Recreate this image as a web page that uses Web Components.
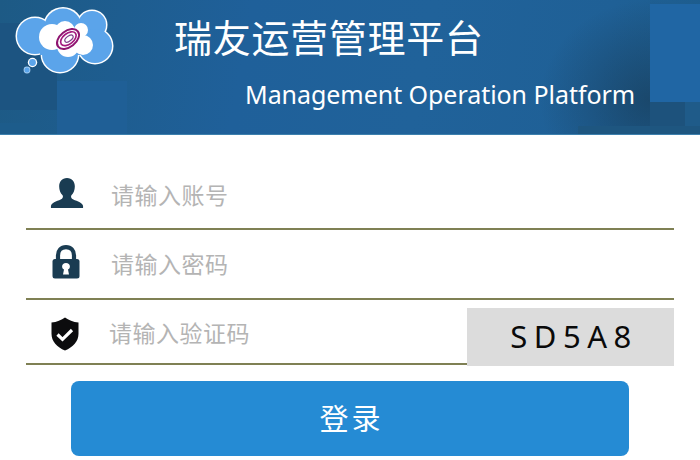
<!DOCTYPE html>
<html lang="zh">
<head>
<meta charset="utf-8">
<title>瑞友运营管理平台</title>
<style>
    html, body { margin: 0; background: #fff; }
    body { width: 700px; height: 460px; overflow: hidden; }
</style>
</head>
<body>
<login-page>
    <app-banner title-text="瑞友运营管理平台" sub-text="Management Operation Platform"></app-banner>
    <login-field icon="user" row-height="95" text-shift="0" text-left="111" icon-shift="-1" icon-x="1">请输入账号</login-field>
    <login-field icon="lock" row-height="70" text-shift="-1.500" text-left="111" icon-shift="-2" icon-x="0">请输入密码</login-field>
    <login-field icon="shield" row-height="65" text-shift="3" text-left="109" icon-shift="5" icon-x="-1" code="SD5A8">请输入验证码</login-field>
    <login-button>登录</login-button>
</login-page>

<script>
class LoginPage extends HTMLElement {
    connectedCallback() {
        let shadowRoot = this.attachShadow({mode: 'open'})
        shadowRoot.innerHTML = `
        <style>
            :host {
                display: flex;
                flex-direction: column;
                width: 700px;
                height: 460px;
                font-family: "Open Sans", "Noto Sans CJK SC", sans-serif;
            }
        </style>
        <slot></slot>
        `
    }
}

class AppBanner extends HTMLElement {
    connectedCallback() {
        let shadowRoot = this.attachShadow({mode: 'open'})
        shadowRoot.innerHTML = `
        <style>
            :host {
                display: block;
                position: relative;
                height: 134px;
                flex: none;
                overflow: hidden;
                border-bottom: 1px solid #3d80ad;
                background:
                    radial-gradient(ellipse 110px 100px at 650px 100px, rgba(24,62,92,.7), rgba(24,62,92,0) 100%),
                    linear-gradient(100deg, #1d5a85 0%, #1f609a 35%, #20629a 60%, #1f6096 85%, #1d5c8c 100%);
            }
            .patch { position: absolute; }
            .p1 { left: 0; top: 23px; width: 57px; height: 87px; background: #1c5481; }
            .p2 { left: 57px; top: 81px; width: 70px; height: 53px; background: #1f5f96; }
            .p3 { left: 0; top: 123px; width: 40px; height: 11px; background: #1d5c8b; }
            .p4 { left: 650px; top: 4px; width: 50px; height: 98px; background: #2066a4; }
            .p5 { left: 578px; top: 126px; width: 122px; height: 8px; background: #1e5680; }
            .p6 { left: 650px; top: 102px; width: 35px; height: 24px; background: #1d527c; }
            .p7 { left: 685px; top: 102px; width: 15px; height: 24px; background: #1f5b89; }
            .logo { position: absolute; left: 13px; top: 4px; width: 104px; height: 72px; }
            .texts {
                position: relative;
                display: flex;
                flex-direction: column;
                height: 100%;
                color: #fff;
            }
            .title {
                margin: 11px 0 0 174px;
                font-family: "Noto Sans CJK SC", sans-serif;
                font-size: 38px;
                line-height: 50px;
                letter-spacing: .7px;
                white-space: nowrap;
            }
            .sub {
                margin: 16px 0 0 245px;
                font-family: "Noto Sans", sans-serif;
                font-size: 25px;
                line-height: 34px;
                letter-spacing: -.05px;
                white-space: nowrap;
            }
        </style>
        <div class="patch p1"></div>
        <div class="patch p2"></div>
        <div class="patch p3"></div>
        <div class="patch p4"></div>
        <div class="patch p5"></div>
        <div class="patch p6"></div>
        <div class="patch p7"></div>
        <svg class="logo" viewBox="13 4 104 72">
            <g fill="#fff">
                <circle cx="35" cy="36" r="19.500"/>
                <circle cx="63" cy="27" r="20"/>
                <circle cx="92" cy="25" r="15.500"/>
                <circle cx="95" cy="46" r="18.500"/>
                <circle cx="60" cy="54" r="19.500"/>
                <rect x="40" y="25" width="50" height="30"/>
                <circle cx="32.500" cy="62.500" r="4.700"/>
                <circle cx="27" cy="70" r="3.400" fill="#a5cdf0"/>
            </g>
            <g fill="#5ba4ea">
                <circle cx="35" cy="36" r="18"/>
                <circle cx="63" cy="27" r="18.500"/>
                <circle cx="92" cy="25" r="14"/>
                <circle cx="95" cy="46" r="17"/>
                <circle cx="60" cy="54" r="18"/>
                <rect x="40" y="25" width="50" height="30"/>
                <circle cx="32.500" cy="62.500" r="3.400"/>
                <circle cx="27" cy="70" r="2.500"/>
            </g>
            <g fill="#fff">
                <circle cx="52" cy="37" r="13"/>
                <circle cx="65" cy="31" r="10"/>
                <circle cx="81" cy="30" r="7"/>
                <circle cx="83" cy="45" r="10"/>
                <circle cx="68" cy="46" r="11"/>
                <rect x="55" y="30" width="30" height="18"/>
            </g>
            <g fill="none" transform="rotate(-38 68 39)">
                <ellipse cx="68" cy="39" rx="12.500" ry="8" stroke-width="2" stroke="#8e1470"/>
                <ellipse cx="68.500" cy="39" rx="9" ry="5.300" stroke-width="1.700" stroke="#a3197e"/>
                <ellipse cx="69" cy="39.300" rx="4.800" ry="2.500" stroke-width="1.200" stroke="#7d3f8c"/>
            </g>
        </svg>
        <div class="texts">
            <div class="title">${this.getAttribute('title-text')}</div>
            <div class="sub">${this.getAttribute('sub-text')}</div>
        </div>
        `
    }
}

const FIELD_ICONS = {
    user: `<svg width="34" height="32" viewBox="0 0 36 34" preserveAspectRatio="none" fill="#1a3c52">
        <path d="M18 1c-5.400 0-8.300 4-8.300 9 0 3.800 1.400 7 3.400 9.200.9 1 .8 3-.4 3.800C9.300 25.300 2.500 25.800 1 30.500V33h34v-2.500c-1.500-4.700-8.300-5.200-11.700-7.500-1.200-.8-1.300-2.800-.4-3.800 2-2.200 3.400-5.400 3.400-9.200 0-5-2.900-9-8.300-9z"/>
    </svg>`,
    lock: `<svg width="28" height="34" viewBox="0 0 28 34">
        <path fill="none" stroke="#1a3c52" stroke-width="4.200" d="M6 17V10.500C6 5.500 9 2.200 14 2.200s8 3.300 8 8.300V17"/>
        <rect x="0.500" y="14" width="27" height="19.500" rx="2.500" fill="#1a3c52"/>
        <path fill="#fff" d="M14 18c-2.300 0-3.900 1.500-3.900 3.500 0 1.500.8 2.500 1.900 3.100L11 29.500h6l-1-4.900c1.100-.6 1.900-1.600 1.900-3.100 0-2-1.600-3.500-3.900-3.500z"/>
    </svg>`,
    shield: `<svg width="28" height="34" viewBox="0 0 28 34">
        <path fill="#0c0c0e" d="M14 .5C10.500 3.200 5.800 5 .5 5.500v11.300C.5 24.500 6 30.300 14 33.500c8-3.200 13.500-9 13.500-16.700V5.500C22.200 5 17.500 3.200 14 .5z"/>
        <path fill="none" stroke="#fff" stroke-width="3.200" d="M6.500 17.500l5 4.800 9.500-9.300"/>
    </svg>`
}

class LoginField extends HTMLElement {
    connectedCallback() {
        let shadowRoot = this.attachShadow({mode: 'open'})
        let code = this.getAttribute('code')
        let rowHeight = this.getAttribute('row-height')
        let textShift = Number(this.getAttribute('text-shift'))
        let textLeft = this.getAttribute('text-left')
        let iconShift = Number(this.getAttribute('icon-shift'))
        let iconX = Number(this.getAttribute('icon-x'))
        shadowRoot.innerHTML = `
        <style>
            :host {
                display: flex;
                flex: none;
                box-sizing: border-box;
                height: ${rowHeight}px;
                margin: 0 26px;
                align-items: flex-end;
            }
            .row {
                flex: 1;
                display: flex;
                align-items: center;
                box-sizing: border-box;
                height: 70px;
                border-bottom: 2px solid #7f8054;
            }
            .icon {
                flex: none;
                display: flex;
                justify-content: center;
                width: 80px;
                margin-top: ${iconShift * 2}px;
                margin-left: ${iconX}px;
                margin-right: ${-iconX}px;
            }
            .icon svg { display: block; }
            .text {
                color: #b4b4b4;
                font-family: "Noto Sans CJK SC", sans-serif;
                font-size: 23px;
                letter-spacing: .5px;
                margin-top: ${textShift * 2}px;
                margin-left: ${textLeft - 106}px;
                white-space: nowrap;
            }
            .code {
                flex: none;
                display: flex;
                align-items: center;
                justify-content: center;
                width: 207px;
                height: 58px;
                margin-bottom: -1px;
                background: #dcdcdc;
                color: #0a0a0a;
                font-family: "Noto Sans", sans-serif;
                font-size: 31px;
                letter-spacing: 6.500px;
                padding: 0 0 3px 7px;
                box-sizing: border-box;
            }
        </style>
        <div class="row">
            <div class="icon">${FIELD_ICONS[this.getAttribute('icon')]}</div>
            <div class="text"><slot></slot></div>
        </div>
        ${code ? `<div class="code">${code}</div>` : ''}
        `
    }
}

class LoginButton extends HTMLElement {
    connectedCallback() {
        let shadowRoot = this.attachShadow({mode: 'open'})
        shadowRoot.innerHTML = `
        <style>
            :host {
                display: flex;
                flex: none;
                align-items: center;
                justify-content: center;
                box-sizing: border-box;
                height: 75px;
                margin: 16px 71px 0;
                padding: 0 0 3px 3px;
                border-radius: 8px;
                background: #258bd4;
                color: #fff;
                font-family: "Noto Sans CJK SC", sans-serif;
                font-size: 29px;
                letter-spacing: 3px;
                cursor: pointer;
            }
        </style>
        <slot></slot>
        `
    }
}

window.customElements.define('login-page', LoginPage);
window.customElements.define('app-banner', AppBanner);
window.customElements.define('login-field', LoginField);
window.customElements.define('login-button', LoginButton);
</script>
</body>
</html>
